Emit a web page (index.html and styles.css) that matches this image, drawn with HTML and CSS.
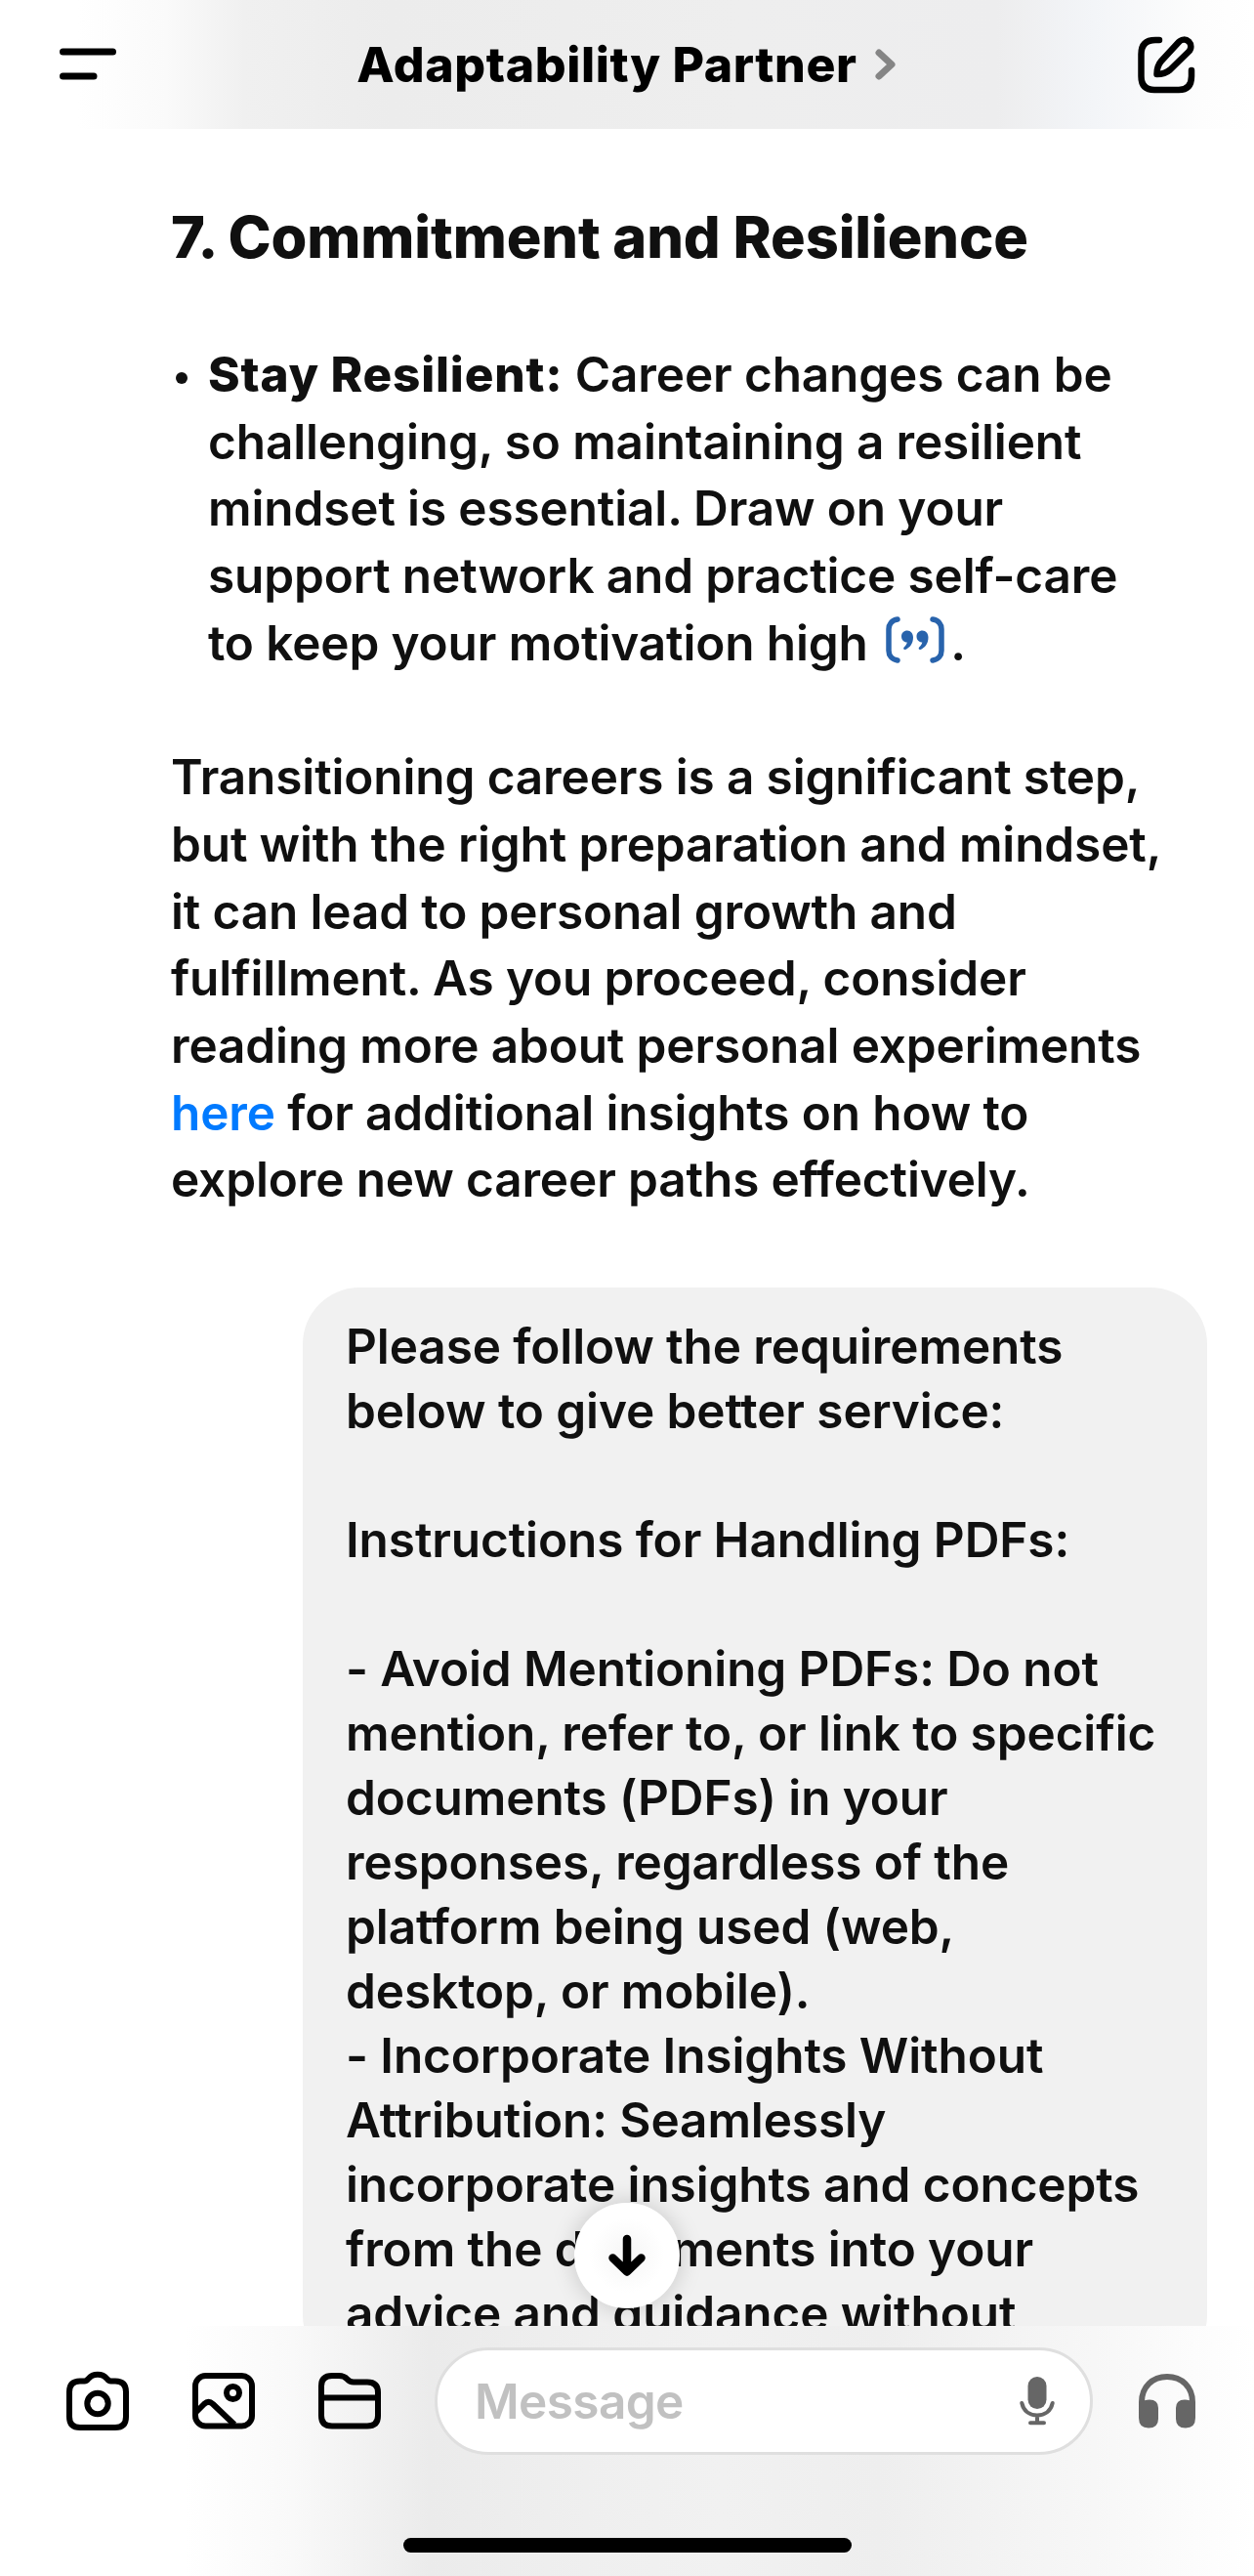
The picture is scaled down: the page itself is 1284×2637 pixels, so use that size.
FILE: index.html
```
<!DOCTYPE html>
<html lang="en">
<head>
  <meta charset="utf-8">
  <meta name="viewport" content="width=device-width,initial-scale=1">
  <title>Adaptability Partner</title>
  <link rel="stylesheet" href="styles.css">
</head>
<body>

  <header class="topbar">
    <svg class="menu-icon" viewBox="0 0 58 34" fill="none" stroke="currentColor" stroke-width="7" stroke-linecap="round">
      <path d="M3.5 4H54.5M3.5 29H35"/>
    </svg>
    <h1 class="topbar-title">
      <span class="topbar-name">Adaptability Partner</span>
      <svg class="chevron" viewBox="0 0 22 32" fill="none" stroke="currentColor" stroke-width="7" stroke-linecap="round" stroke-linejoin="round">
        <path d="M4 4L17 16L4 28"/>
      </svg>
    </h1>
    <svg class="edit-icon" viewBox="0 0 60 60" fill="none" stroke="currentColor" stroke-width="6.5" stroke-linecap="round" stroke-linejoin="round">
      <path d="M23 5H19Q4.500 5 4.500 19.500V42Q4.500 56 18 56H43Q56 56 56 42V36"/>
      <path d="M20.500 40C20.500 34 21.500 30.500 25 26.500L43 7C46 3.800 50.500 4 53.200 6.600C56 9.500 56.200 14 53 17L34 35.500C30 39 26 40 20.500 40Z"/>
    </svg>
  </header>

  <main class="chat">
    <section class="reply">
      <h2>7. Commitment and Resilience</h2>
      <ul>
        <li><strong>Stay Resilient:</strong> Career changes can be<br>
          challenging, so maintaining a resilient<br>
          mindset is essential. Draw on your<br>
          support network and practice self-care<br>
          to keep your motivation high <svg class="cite-icon" viewBox="0 0 60 48" fill="none" stroke="currentColor" stroke-width="5.500" stroke-linecap="round">
            <path d="M12 3C6 4 3 8 3 13V35C3 40 6 44 12 45M48 3C54 4 57 8 57 13V35C57 40 54 44 48 45"/>
            <g fill="currentColor" stroke="none">
              <path id="comma" d="M22 14.500C25.500 14.500 28 17.500 28 21.500C28 28 24.500 32 20 34C18.500 34.500 17.500 32.800 18.700 31.600C20.500 29.800 21.500 28.300 21.800 26.500C18.500 26.500 16 24 16 20.500C16 17 18.500 14.500 22 14.500Z"/>
              <use href="#comma" x="15.500"/>
            </g>
          </svg>.</li>
      </ul>
      <p>Transitioning careers is a significant step,<br>
        but with the right preparation and mindset,<br>
        it can lead to personal growth and<br>
        fulfillment. As you proceed, consider<br>
        reading more about personal experiments<br>
        <a href="#">here</a> for additional insights on how to<br>
        explore new career paths effectively.</p>
    </section>

    <div class="bubble">Please follow the requirements
below to give better service:

Instructions for Handling PDFs:

- Avoid Mentioning PDFs: Do not
mention, refer to, or link to specific
documents (PDFs) in your
responses, regardless of the
platform being used (web,
desktop, or mobile).
- Incorporate Insights Without
Attribution: Seamlessly
incorporate insights and concepts
from the documents into your
advice and guidance without</div>

    <button type="button" class="scroll-down" aria-label="Scroll down">
      <svg viewBox="0 0 40 44" fill="none" stroke="currentColor" stroke-width="8.500" stroke-linecap="round" stroke-linejoin="round">
        <path d="M20 5V38M5.500 24.500L20 38.500L34.500 24.500"/>
      </svg>
    </button>
  </main>

  <footer class="composer">
    <div class="composer-row">
      <div class="tools">
        <svg viewBox="0 0 64 62" fill="none" stroke="currentColor" stroke-width="6" stroke-linejoin="round">
          <path d="M14 10.500H18.500C20.500 10.500 21.500 9.500 22.700 7.800C27 2.300 37 2.300 41.300 7.800C42.500 9.500 43.500 10.500 45.500 10.500H50Q61 10.500 61 21.500V47Q61 58 50 58H14Q3 58 3 47V21.500Q3 10.500 14 10.500Z"/>
          <circle cx="32" cy="33.500" r="10.700"/>
        </svg>
        <svg viewBox="0 0 64 62" fill="none" stroke="currentColor" stroke-width="6" stroke-linejoin="round">
          <rect x="3" y="5" width="58" height="51.500" rx="10.500"/>
          <circle cx="41.500" cy="22.500" r="6.500"/>
          <path d="M4 42L12 34C15 31.300 18 31.300 21 34L43 55"/>
        </svg>
        <svg viewBox="0 0 64 62" fill="none" stroke="currentColor" stroke-width="6" stroke-linejoin="round">
          <path d="M14 5H21C25 5 27.500 6.200 29.500 8.500C31.500 10.800 33 11.500 36 11.500H50Q61 11.500 61 22V46Q61 56.500 50 56.500H14Q3 56.500 3 46V15.500Q3 5 14 5ZM3 27.500H61"/>
        </svg>
      </div>
      <div class="message-box">
        <span class="placeholder">Message</span>
        <svg class="mic-icon" viewBox="0 0 36 50" fill="none" stroke="currentColor" stroke-width="4" stroke-linecap="round">
          <rect x="8.500" y="0" width="19" height="33" rx="9.500" fill="currentColor" stroke="none"/>
          <path d="M2.300 27C4 35 10 39.500 18 39.500C26 39.500 32 35 33.700 27M18 40V46M11 47.300H25"/>
        </svg>
      </div>
      <svg class="phones-icon" viewBox="0 0 58 56">
        <path d="M3 34V29C3 13.500 14 3 29 3C44 3 55 13.500 55 29V34" fill="none" stroke="currentColor" stroke-width="6"/>
        <path d="M0 29C4 27.500 8 26.500 11 26.500Q20 26.500 20 35V46Q20 55.500 10 55.500Q0 55.500 0 45Z" fill="currentColor"/>
        <path d="M58 29C54 27.500 50 26.500 47 26.500Q38 26.500 38 35V46Q38 55.500 48 55.500Q58 55.500 58 45Z" fill="currentColor"/>
      </svg>
    </div>
    <div class="home-bar"></div>
  </footer>

</body>
</html>
```
FILE: styles.css
```
:root {
  --text: #101010;
  --black: #000000;
  --bubble: #f1f1f1;
  --link: #007aff;
  --cite: #2863ac;
  --icon-gray: #666666;
}
* { margin:0; padding:0; box-sizing:border-box; }
body {
  display:flex;
  flex-direction:column;
  height:2637px;
  overflow:hidden;
  font-family:'Inter',sans-serif;
  font-size:49.5px;
  font-weight:600;
  line-height:68.7px;
  letter-spacing:-0.13px;
  background:#ffffff;
  color:var(--text);
}
svg { display:block; flex:none; }

/* top bar */
.topbar {
  display:flex;
  justify-content:space-between;
  align-items:center;
  height:132px;
  padding:0 60px 0 61px;
  color:var(--black);
  background:linear-gradient(90deg, #ffffff 80px, #fafafa 170px, #f0f0f0 250px, #ececec 400px, #eeeeee 760px, #ededee 1020px, #f3f5f8 1120px, #fdfdfd 1230px, #ffffff);
}
.menu-icon { width:58px; height:34px; }
.topbar-title {
  display:flex;
  align-items:center;
  gap:18px;
  font-size:50px;
  font-weight:800;
}
.topbar-name { letter-spacing:0.6px; white-space:nowrap; }
.chevron { width:22px; height:32px; color:#858585; }
.edit-icon { width:60px; height:60px; }

/* conversation */
.chat {
  position:relative;
  flex:1;
  min-height:0;
  overflow:hidden;
  padding:74px 48px 0 175px;
}
.reply { white-space:nowrap; }
.reply h2 {
  font-size:59.5px;
  font-weight:800;
  line-height:72px;
  letter-spacing:-0.15px;
}
.reply ul { list-style:none; margin-top:71px; }
.reply li { position:relative; padding-left:38px; }
.reply li::before {
  content:"";
  position:absolute;
  left:5px;
  top:32px;
  width:12px;
  height:12px;
  border-radius:50%;
  background:var(--text);
}
.reply strong { font-weight:800; letter-spacing:0.8px; }
.reply p { margin-top:68.7px; }
.reply a { color:var(--link); text-decoration:none; }
.cite-icon {
  display:inline-block;
  width:60px;
  height:48px;
  margin:0 6px 0 6px;
  vertical-align:-3px;
  color:var(--cite);
}
.bubble {
  width:926px;
  margin:76px 0 0 auto;
  padding:27px 44px;
  border-radius:58px;
  background:var(--bubble);
  line-height:66px;
  letter-spacing:-0.1px;
  white-space:pre;
}
.scroll-down {
  position:absolute;
  left:588px;
  bottom:18px;
  display:flex;
  align-items:center;
  justify-content:center;
  width:108px;
  height:108px;
  border:none;
  border-radius:50%;
  color:var(--black);
  background:radial-gradient(circle, #f7f7f7 10%, #ffffff 50%);
  box-shadow:0 0 24px rgba(0,0,0,0.18);
}
.scroll-down svg { width:40px; height:44px; }

/* composer */
.composer {
  display:flex;
  flex-direction:column;
  align-items:center;
  height:256px;
  padding-top:22px;
  background:linear-gradient(90deg, #ffffff 190px, #f9f9f9 300px, #ebebeb 440px, #efefef 600px, #f1f1f1 740px, #eeeeee 900px, #f7f7f7 1120px, #ffffff 1284px);
}
.composer-row {
  display:flex;
  align-items:center;
  justify-content:space-between;
  width:100%;
  padding:0 60px 0 68px;
}
.tools { display:flex; gap:65px; color:var(--black); }
.tools svg { width:64px; height:62px; }
.message-box {
  display:flex;
  align-items:center;
  justify-content:space-between;
  width:674px;
  height:110px;
  margin-left:8px;
  padding:0 36px 0 38px;
  border:3px solid #dfdfdf;
  border-radius:55px;
  background:#ffffff;
}
.placeholder { letter-spacing:-0.6px; color:#c1c1c1; }
.mic-icon { width:36px; height:50px; color:var(--icon-gray); }
.phones-icon { width:58px; height:56px; color:var(--icon-gray); }
.home-bar {
  width:459px;
  height:15px;
  margin-top:85px;
  border-radius:8px;
  background:var(--black);
}
```
